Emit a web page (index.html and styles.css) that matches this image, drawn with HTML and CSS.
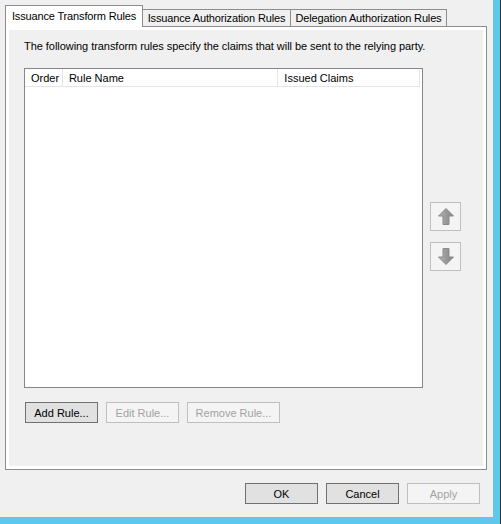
FILE: index.html
```html
<!DOCTYPE html>
<html>
<head>
<meta charset="utf-8">
<link rel="stylesheet" href="styles.css">
</head>
<body>
<div class="frame">
  <div class="window">
    <div class="tabs">
      <div class="tab active">Issuance Transform Rules</div>
      <div class="tab">Issuance Authorization Rules</div>
      <div class="tab">Delegation Authorization Rules</div>
    </div>
    <div class="panel">
      <div class="panel-inner">
        <p class="intro">The following transform rules specify the claims that will be sent to the relying party.</p>
        <div class="list-row">
          <div class="list">
            <div class="list-head">
              <div class="col c-order">Order</div>
              <div class="col c-name">Rule Name</div>
              <div class="col c-claims">Issued Claims</div>
            </div>
          </div>
          <div class="movers">
            <button class="btn mover" disabled aria-label="Move up">
              <svg width="16" height="17" viewBox="0 0 16 17"><defs><linearGradient id="g1" x1="0" x2="1" y1="0" y2="0"><stop offset="0" stop-color="#b8b8b8"/><stop offset="0.5" stop-color="#9a9a9a"/><stop offset="1" stop-color="#808080"/></linearGradient></defs><path d="M8 0.5 L15.5 8 L11 8 L11 16.5 L5 16.5 L5 8 L0.5 8 Z" fill="url(#g1)" stroke="#8a8a8a" stroke-width="1"/></svg>
            </button>
            <button class="btn mover" disabled aria-label="Move down">
              <svg width="16" height="17" viewBox="0 0 16 17"><defs><linearGradient id="g2" x1="0" x2="1" y1="0" y2="0"><stop offset="0" stop-color="#b8b8b8"/><stop offset="0.5" stop-color="#9a9a9a"/><stop offset="1" stop-color="#808080"/></linearGradient></defs><path d="M8 16.5 L15.5 9 L11 9 L11 0.5 L5 0.5 L5 9 L0.5 9 Z" fill="url(#g2)" stroke="#8a8a8a" stroke-width="1"/></svg>
            </button>
          </div>
        </div>
        <div class="rule-buttons">
          <button class="btn default">Add Rule...</button>
          <button class="btn" disabled>Edit Rule...</button>
          <button class="btn wide" disabled>Remove Rule...</button>
        </div>
      </div>
    </div>
    <div class="footer">
      <button class="btn default">OK</button>
      <button class="btn default">Cancel</button>
      <button class="btn" disabled>Apply</button>
    </div>
  </div>
</div>
</body>
</html>
```

FILE: styles.css
```css
* { box-sizing: border-box; }
html, body { margin: 0; padding: 0; background: #5cc9ea; }
body {
  font-family: "Liberation Sans", Arial, sans-serif;
  font-size: 11px;
  color: #000;
}
.frame {
  width: 501px;
  height: 524px;
  border-right: 1px solid #2e2e2e;
  background: #5cc9ea;
}
.window {
  width: 493px;
  height: 517px;
  background: #f0f0f0;
  padding: 5px 0 0 5px;
  display: flex;
  flex-direction: column;
}
.tabs {
  display: flex;
  align-items: flex-end;
  height: 21px;
}
.tab {
  height: 17px;
  line-height: 16px;
  padding: 0;
  border: 1px solid #8d8d8d;
  border-bottom: none;
  border-left: none;
  background: #f0f0f0;
  white-space: nowrap;
  text-align: center;
  letter-spacing: -0.15px;
}
.tab.active {
  height: 22px;
  line-height: 20px;
  border-left: 1px solid #8d8d8d;
  background: #fff;
  width: 138px;
  margin-bottom: -1px;
  position: relative;
  z-index: 1;
}
.tab:nth-child(2) { width: 148px; }
.tab:nth-child(3) { width: 156px; }
.panel {
  width: 482px;
  height: 444px;
  border: 1px solid #8d8d8d;
  background: #fff;
  padding: 3px;
}
.panel-inner {
  background: #f0f0f0;
  height: 100%;
  padding: 9px 0 0 15px;
  display: flex;
  flex-direction: column;
}
.intro {
  margin: 0;
  line-height: 15px;
  height: 15px;
  letter-spacing: -0.05px;
}
.list-row {
  display: flex;
  margin-top: 14px;
  gap: 7px;
}
.list {
  width: 399px;
  height: 320px;
  border: 1px solid #828790;
  background: #fff;
}
.list-head {
  display: flex;
  height: 18px;
  border-bottom: 1px solid #e5e5e5;
  margin-right: 2px;
}
.col {
  line-height: 18px;
  padding-left: 6px;
  border-right: 1px solid #e5e5e5;
  white-space: nowrap;
}
.c-order { width: 38px; }
.c-name { width: 216px; }
.c-claims { width: 142px; }
.movers {
  display: flex;
  flex-direction: column;
  gap: 11px;
  padding-top: 134px;
}
.btn {
  font-family: inherit;
  font-size: 11px;
  width: 73px;
  height: 21px;
  padding: 0;
  margin: 0;
  border: 1px solid #adadad;
  background: #e1e1e1;
  color: #000;
}
.btn.default { border-color: #707070; }
.btn:disabled {
  background: #f4f4f4;
  border-color: #bfbfbf;
  color: #a2a2a2;
}
.btn.wide { width: 93px; }
.btn.mover {
  width: 31px;
  height: 29px;
  display: flex;
  align-items: center;
  justify-content: center;
}
.rule-buttons {
  display: flex;
  gap: 8px;
  margin-top: 14px;
  padding-left: 1px;
}
.footer {
  display: flex;
  justify-content: flex-end;
  gap: 8px;
  padding: 13px 13px 0 0;
}
```
